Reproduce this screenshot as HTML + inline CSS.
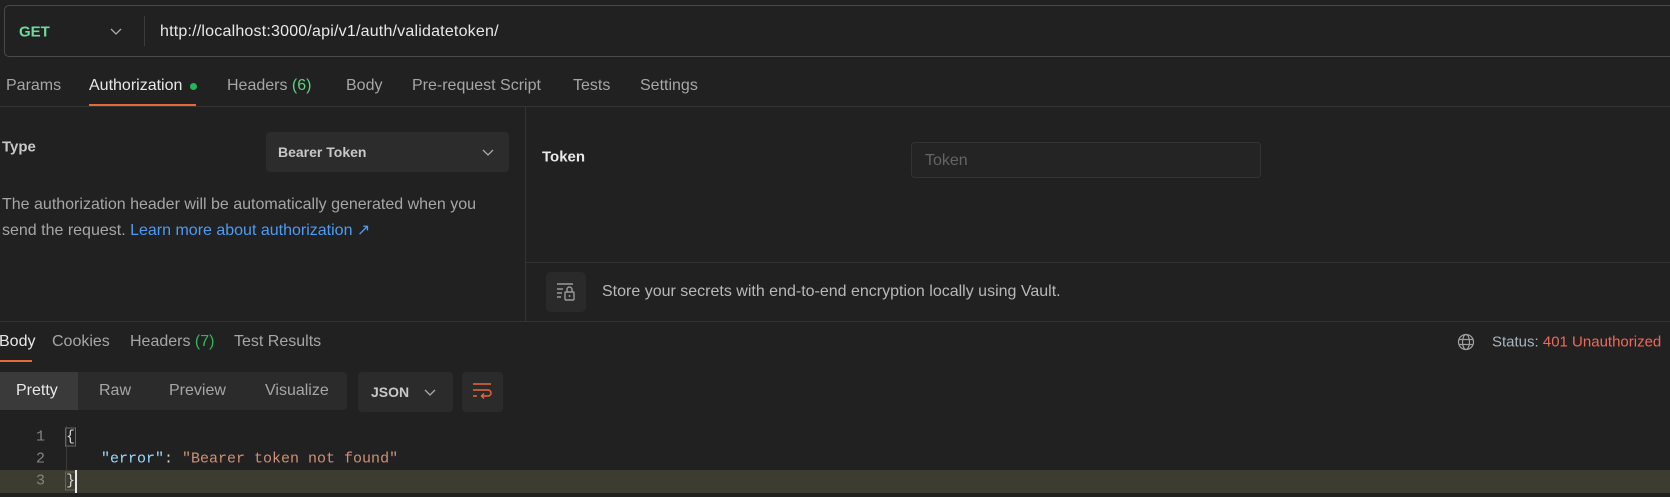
<!DOCTYPE html>
<html><head><meta charset="utf-8"><style>
*{margin:0;padding:0;box-sizing:border-box}
body{width:1670px;height:497px;background:#212121;font-family:"Liberation Sans",sans-serif;font-size:16px;color:#a6a6a6;position:relative;overflow:hidden}
.a{position:absolute;white-space:nowrap}
.c{transform:translateY(-50%)}
.w{color:#e8e8e8}
</style></head><body>
<!-- URL bar -->
<div class="a" style="left:4px;top:5px;width:1700px;height:52px;border:1px solid #4a4a4a;border-radius:5px"></div>
<div class="a c" style="left:19px;top:32px;color:#6bdd9a;font-weight:bold;font-size:15px">GET</div>
<svg class="a" style="left:110px;top:27px" width="12" height="10"><path d="M1 2l5 5 5-5" stroke="#aaa" fill="none" stroke-width="1.3"/></svg>
<div class="a" style="left:144px;top:16px;width:1px;height:30px;background:#3c3c3c"></div>
<div class="a c w" style="left:160px;top:32px;letter-spacing:0.2px">http://localhost:3000/api/v1/auth/validatetoken/</div>
<!-- tabs -->
<div class="a c" style="left:6px;top:86px">Params</div>
<div class="a c w" style="left:89px;top:86px">Authorization</div>
<div class="a" style="left:190px;top:83px;width:7px;height:7px;border-radius:50%;background:#1fb85c"></div>
<div class="a c" style="left:227px;top:86px">Headers <span style="color:#5fcf85">(6)</span></div>
<div class="a c" style="left:346px;top:86px">Body</div>
<div class="a c" style="left:412px;top:86px">Pre-request Script</div>
<div class="a c" style="left:573px;top:86px">Tests</div>
<div class="a c" style="left:640px;top:86px">Settings</div>
<div class="a" style="left:0;top:106px;width:1670px;height:1px;background:#333"></div>
<div class="a" style="left:89px;top:104px;width:107px;height:2px;background:#e8683a"></div>
<!-- left auth -->
<div class="a c" style="left:2px;top:147px;font-weight:bold;color:#c8c8c8;font-size:15px">Type</div>
<div class="a" style="left:266px;top:132px;width:243px;height:40px;background:#2c2c2c;border-radius:4px"></div>
<div class="a c" style="left:278px;top:152px;font-weight:bold;color:#c8c8c8;font-size:14px">Bearer Token</div>
<svg class="a" style="left:482px;top:148px" width="12" height="10"><path d="M1 2l5 5 5-5" stroke="#aaa" fill="none" stroke-width="1.3"/></svg>
<div class="a c" style="left:2px;top:205px">The authorization header will be automatically generated when you</div>
<div class="a c" style="left:2px;top:230px">send the request. <span style="color:#4d9bf5">Learn more about authorization ↗</span></div>
<div class="a" style="left:525px;top:107px;width:1px;height:215px;background:#333"></div>
<!-- right auth -->
<div class="a c w" style="left:542px;top:157px;font-weight:bold;font-size:15px">Token</div>
<div class="a" style="left:911px;top:142px;width:350px;height:36px;border:1px solid #333;background:#242424;border-radius:4px"></div>
<div class="a c" style="left:925px;top:161px;color:#646464">Token</div>
<div class="a" style="left:525px;top:262px;width:1145px;height:1px;background:#333"></div>
<div class="a" style="left:546px;top:272px;width:40px;height:40px;background:#2a2a2a;border-radius:5px"></div>
<svg class="a" style="left:555px;top:281px" width="22" height="22" viewBox="0 0 22 22" fill="none" stroke="#9a9a9a" stroke-width="1.4"><path d="M2 3h16M2 8h6M2 12h5M2 16h4"/><rect x="10" y="11" width="9" height="8" rx="1"/><path d="M12 11V8.5a2.5 2.5 0 0 1 5 0V11M14.5 14v2"/></svg>
<div class="a c" style="left:602px;top:292px;color:#b8b8b8">Store your secrets with end-to-end encryption locally using Vault.</div>
<div class="a" style="left:0;top:321px;width:1670px;height:1px;background:#333"></div>
<!-- response tabs -->
<div class="a c w" style="left:-1px;top:342px">Body</div>
<div class="a" style="left:0;top:360px;width:32px;height:2px;background:#e8683a"></div>
<div class="a c" style="left:52px;top:342px">Cookies</div>
<div class="a c" style="left:130px;top:342px">Headers <span style="color:#2fb85a">(7)</span></div>
<div class="a c" style="left:234px;top:342px">Test Results</div>
<svg class="a" style="left:1457px;top:333px" width="18" height="18" viewBox="0 0 18 18" fill="none" stroke="#a0a0a0" stroke-width="1.2"><circle cx="9" cy="9" r="7.5"/><ellipse cx="9" cy="9" rx="3.5" ry="7.5"/><path d="M2 6.5h14M2 11.5h14"/></svg>
<div class="a c" style="left:1492px;top:342px;color:#a9b4c0;font-size:15px">Status: <span style="color:#f0695a">401 Unauthorized</span></div>
<!-- toolbar -->
<div class="a" style="left:0;top:372px;width:347px;height:38px;background:#2b2b2b;border-radius:0 4px 4px 0"></div>
<div class="a" style="left:0;top:372px;width:78px;height:38px;background:#3a3a3a"></div>
<div class="a c w" style="left:16px;top:391px">Pretty</div>
<div class="a c" style="left:99px;top:391px">Raw</div>
<div class="a c" style="left:169px;top:391px">Preview</div>
<div class="a c" style="left:265px;top:391px">Visualize</div>
<div class="a" style="left:358px;top:372px;width:95px;height:40px;background:#2b2b2b;border-radius:4px"></div>
<div class="a c" style="left:371px;top:392px;font-weight:bold;color:#c8c8c8;font-size:14px">JSON</div>
<svg class="a" style="left:424px;top:388px" width="12" height="10"><path d="M1 2l5 5 5-5" stroke="#aaa" fill="none" stroke-width="1.3"/></svg>
<div class="a" style="left:462px;top:372px;width:41px;height:40px;background:#2b2b2b;border-radius:4px"></div>
<svg class="a" style="left:472px;top:382px" width="22" height="20" viewBox="0 0 22 20" fill="none" stroke="#e8683a" stroke-width="1.4"><path d="M1 2h18M1 8h15a3 3 0 0 1 0 6h-6M12 11.5l-2.5 2.5 2.5 2.5M1 14h4"/></svg>
<!-- code -->
<div class="a" style="left:0;top:470px;width:1670px;height:23px;background:#3c3c30"></div>
<div class="a" style="left:66px;top:426px;width:1px;height:44px;background:#3a3a3a"></div>
<div style="font-family:'Liberation Mono',monospace;font-size:15px">
<div class="a c" style="left:36px;top:437px;color:#858585">1</div>
<div class="a c" style="left:36px;top:459px;color:#858585">2</div>
<div class="a c" style="left:36px;top:481px;color:#858585">3</div>
<div class="a c" style="left:66px;top:437px;color:#d4d4d4;outline:1px solid #666">{</div>
<div class="a c" style="left:101px;top:459px"><span style="color:#9cdcfe">"error"</span><span style="color:#d4d4d4">: </span><span style="color:#ce9178">"Bearer token not found"</span></div>
<div class="a c" style="left:66px;top:481px;color:#d4d4d4;outline:1px solid #666">}</div>
<div class="a" style="left:75px;top:470px;width:2px;height:23px;background:#e8e8e8"></div>
</div>
</body></html>
